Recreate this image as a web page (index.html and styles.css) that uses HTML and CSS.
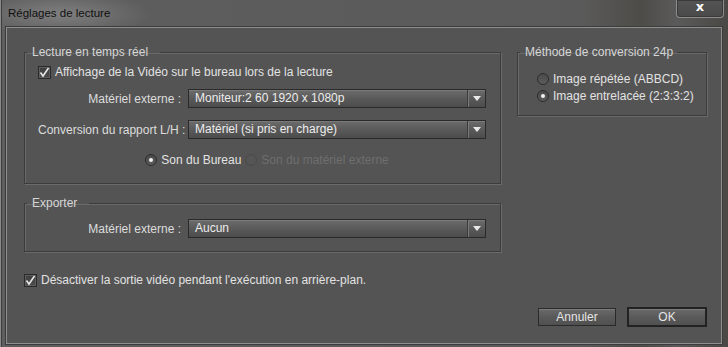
FILE: index.html
```html
<!DOCTYPE html>
<html lang="fr">
<head>
<meta charset="utf-8">
<title>Réglages de lecture</title>
<link rel="stylesheet" href="styles.css">
</head>
<body>
<div class="window">
  <div class="titlebar">
    <span class="title">Réglages de lecture</span>
    <button class="close" type="button"><span>x</span></button>
  </div>
  <div class="panel">
    <div class="columns">
      <div class="leftcol">
        <fieldset class="group">
          <legend class="legend-wide">Lecture en temps réel</legend>
          <div class="group-body body-live">
            <label class="check-row">
              <span class="checkbox checked"><svg viewBox="0 0 13 13" width="13" height="13"><path d="M2.5 6.5 L5 10 L10.5 2" fill="none" stroke="#e6e6e6" stroke-width="1.6"/></svg></span>
              <span>Affichage de la Vidéo sur le bureau lors de la lecture</span>
            </label>
            <div class="form-grid">
              <span class="field-label">Matériel externe :</span>
              <div class="select"><span class="select-text">Moniteur:2 60 1920 x 1080p</span><span class="select-arrow"></span></div>
              <span class="field-label">Conversion du rapport L/H :</span>
              <div class="select"><span class="select-text">Matériel (si pris en charge)</span><span class="select-arrow"></span></div>
            </div>
            <div class="radio-row">
              <span class="radio-item"><span class="radio selected"></span><span>Son du Bureau</span></span>
              <span class="radio-item disabled"><span class="radio"></span><span>Son du matériel externe</span></span>
            </div>
          </div>
        </fieldset>
        <fieldset class="group">
          <legend class="legend-wide">Exporter</legend>
          <div class="group-body body-export">
            <div class="form-grid">
              <span class="field-label">Matériel externe :</span>
              <div class="select"><span class="select-text">Aucun</span><span class="select-arrow"></span></div>
            </div>
          </div>
        </fieldset>
      </div>
      <div class="rightcol">
        <fieldset class="group">
          <legend>Méthode de conversion 24p</legend>
          <div class="group-body body-24p">
            <span class="radio-item"><span class="radio"></span><span>Image répétée (ABBCD)</span></span>
            <span class="radio-item"><span class="radio selected"></span><span>Image entrelacée (2:3:3:2)</span></span>
          </div>
        </fieldset>
      </div>
    </div>
    <label class="check-row bottom-check">
      <span class="checkbox checked"><svg viewBox="0 0 13 13" width="13" height="13"><path d="M2.5 6.5 L5 10 L10.5 2" fill="none" stroke="#e6e6e6" stroke-width="1.6"/></svg></span>
      <span>Désactiver la sortie vidéo pendant l'exécution en arrière-plan.</span>
    </label>
    <div class="buttons">
      <button class="btn" type="button">Annuler</button>
      <button class="btn btn-default" type="button">OK</button>
    </div>
  </div>
</div>
</body>
</html>
```

FILE: styles.css
```css
* { box-sizing: border-box; }
html, body { margin: 0; padding: 0; }
body {
  width: 728px;
  height: 347px;
  overflow: hidden;
  background: #3a3834;
  font-family: "Liberation Sans", Arial, sans-serif;
  font-size: 12px;
  color: #dedede;
}
.window {
  width: 728px;
  height: 347px;
  background:
    radial-gradient(ellipse 90px 22px at 60px 14px, rgba(190,190,190,0.35), rgba(190,190,190,0) 100%),
    linear-gradient(90deg, #5e5e5e 0%, #5a5a5a 80%, #4e4c48 88%, #5a5a5a 93%, #4a4844 100%);
  border-left: 1px solid #8a8a8a;
  box-shadow: inset 1px 0 0 #3e3e3e;
  display: flex;
  flex-direction: column;
}
.titlebar {
  height: 27px;
  display: flex;
  align-items: flex-start;
  justify-content: space-between;
}
.title {
  margin: 5px 0 0 7px;
  font-family: "Liberation Sans", Arial, sans-serif;
  font-size: 11.5px;
  color: #111;
  line-height: 16px;
}
.close {
  margin: 0 4px 0 0;
  width: 48px;
  height: 18px;
  border: 1px solid #8c8c8c;
  border-top: none;
  border-radius: 0 0 4px 4px;
  background: linear-gradient(#545454, #4a4a4a);
  box-shadow: inset 0 0 0 1px #3a3a3a;
  padding: 0;
  display: flex;
  align-items: center;
  justify-content: center;
  color: #fff;
  font-family: "DejaVu Sans", sans-serif;
  font-weight: bold;
  font-size: 13px;
  line-height: 14px;
}
.close span { margin-top: -3px; }
.panel {
  margin-left: 5px;
  width: 716px;
  height: 317px;
  background: #545454;
  border: 1px solid #8e8e8e;
  box-shadow: 0 0 0 1px #3c3c3c;
  padding: 17px 14px 0 17px;
  display: flex;
  flex-direction: column;
}
.columns {
  display: flex;
  gap: 16px;
  align-items: flex-start;
}
.leftcol {
  width: 477px;
  display: flex;
  flex-direction: column;
  gap: 12px;
}
.rightcol { width: 190px; }
.group {
  margin: 0;
  border: 1px solid #3c3c3c;
  box-shadow: 1px 1px 0 #6a6a6a, inset 1px 1px 0 #6a6a6a;
  padding: 0;
  min-width: 0;
}
.group legend {
  margin-left: 2px;
  padding: 0 4px 0 5px;
  line-height: 14px;
  color: #d6d6d6;
}
.group legend.legend-wide { padding-right: 12px; }
.group-body { padding: 0 14px 0 13px; }
.body-live { padding-top: 6px; padding-bottom: 16px; }
.body-export { padding-top: 9px; padding-bottom: 13px; }
.body-24p {
  padding: 13px 6px 12px 19px;
  display: flex;
  flex-direction: column;
  gap: 3px;
}
.check-row {
  display: flex;
  align-items: center;
  gap: 4px;
  height: 14px;
  line-height: 14px;
  color: #e2e2e2;
}
.checkbox {
  width: 13px;
  height: 13px;
  border: 1px solid #2a2a2a;
  background: linear-gradient(#3e3e3e, #4c4c4c);
  box-shadow: inset 0 0 0 1px #5e5e5e;
  display: flex;
  position: relative;
}
.checkbox svg { position: absolute; left: -1px; top: -1px; }
.form-grid {
  margin-top: 10px;
  display: grid;
  grid-template-columns: 143px 298px;
  column-gap: 7px;
  row-gap: 12px;
  align-items: center;
}
.body-export .form-grid { margin-top: 0; }
.field-label {
  text-align: right;
  color: #dcdcdc;
  white-space: nowrap;
}
.select {
  height: 19px;
  border: 1px solid #2a2a2a;
  background: linear-gradient(#6c6c6c, #5a5a5a 50%, #4c4c4c);
  box-shadow: inset 0 1px 0 #7a7a7a;
  display: flex;
  align-items: center;
}
.select-text {
  flex: 1;
  padding-left: 6px;
  color: #ececec;
  white-space: nowrap;
  line-height: 17px;
}
.select-arrow {
  width: 18px;
  height: 100%;
  border-left: 1px solid #3a3a3a;
  box-shadow: inset 1px 0 0 #7a7a7a;
  display: flex;
  align-items: center;
  justify-content: center;
}
.select-arrow::after {
  content: "";
  width: 0;
  height: 0;
  border-left: 4px solid transparent;
  border-right: 4px solid transparent;
  border-top: 5px solid #e8e8e8;
  margin-left: 1px;
}
.radio-row {
  margin-top: 14px;
  display: flex;
  justify-content: center;
  gap: 4px;
  height: 14px;
  padding-left: 10px;
}
.radio-item {
  display: flex;
  align-items: center;
  gap: 4px;
  line-height: 14px;
  color: #e2e2e2;
  white-space: nowrap;
}
.radio-item.disabled { color: #6e6e6e; }
.radio {
  width: 12px;
  height: 12px;
  border-radius: 50%;
  border: 1px solid #2c2c2c;
  background: linear-gradient(#4a4a4a, #5c5c5c);
  display: flex;
  align-items: center;
  justify-content: center;
}
.radio.selected::after {
  content: "";
  width: 4px;
  height: 4px;
  border-radius: 50%;
  background: #f2f2f2;
}
.disabled .radio {
  border-color: #4a4a4a;
  background: #555;
}
.bottom-check { margin-top: 21px; }
.buttons {
  margin-top: 20px;
  display: flex;
  justify-content: flex-end;
  align-items: center;
  gap: 11px;
}
.btn {
  width: 78px;
  height: 18px;
  margin: 0;
  padding: 0;
  border: 1px solid #2a2a2a;
  background: linear-gradient(#6a6a6a, #5a5a5a 50%, #505050);
  box-shadow: inset 0 1px 0 #7c7c7c;
  color: #e4e4e4;
  font-family: "Liberation Sans", Arial, sans-serif;
  font-size: 12px;
  line-height: 16px;
}
.btn-default {
  width: 80px;
  height: 20px;
  border: 2px solid #222;
}
```
